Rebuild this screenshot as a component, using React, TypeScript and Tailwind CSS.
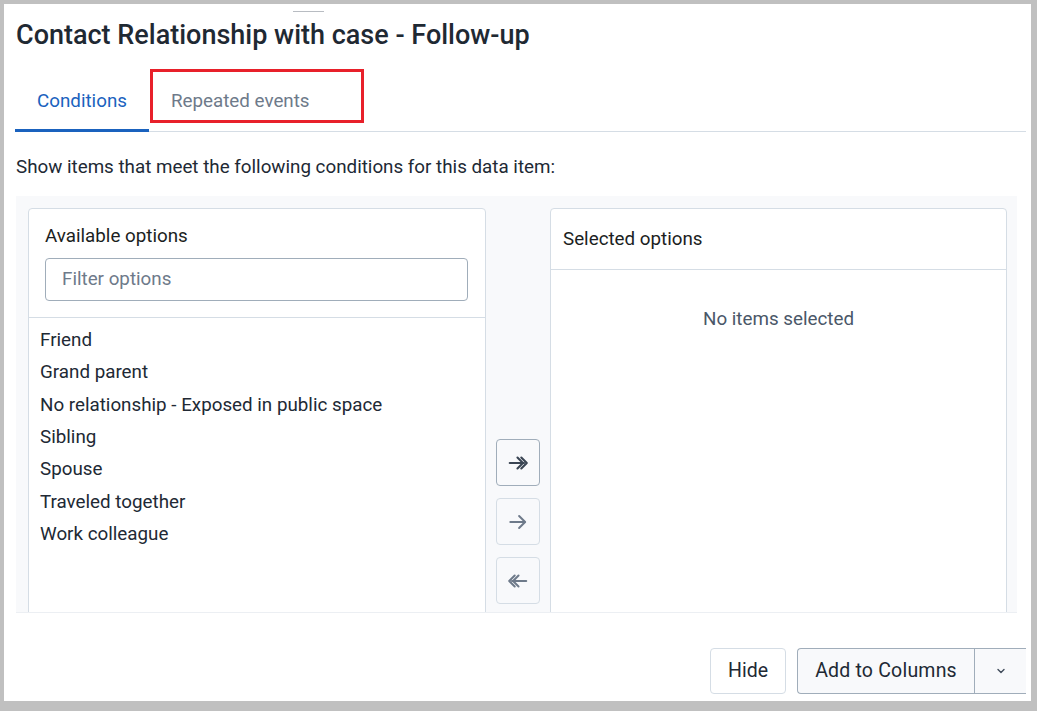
import React from "react";

const DoubleRight = ({ color }: { color: string }) => (
  <svg width="22" height="22" viewBox="0 0 20 20" fill="none" stroke={color} strokeWidth="1.9" strokeLinecap="round" strokeLinejoin="round">
    <path d="M2.5 10h13" />
    <path d="M9.5 5l5 5-5 5" />
    <path d="M13 5l5 5-5 5" />
  </svg>
);
const SingleRight = ({ color }: { color: string }) => (
  <svg width="22" height="22" viewBox="0 0 20 20" fill="none" stroke={color} strokeWidth="1.8" strokeLinecap="round" strokeLinejoin="round">
    <path d="M3 10h13" />
    <path d="M11 4.5l5.5 5.5-5.5 5.5" />
  </svg>
);
const DoubleLeft = ({ color }: { color: string }) => (
  <svg width="22" height="22" viewBox="0 0 20 20" fill="none" stroke={color} strokeWidth="1.8" strokeLinecap="round" strokeLinejoin="round">
    <path d="M17.5 10h-13" />
    <path d="M10.5 5l-5 5 5 5" />
    <path d="M7 5l-5 5 5 5" />
  </svg>
);

const items = [
  "Friend",
  "Grand parent",
  "No relationship - Exposed in public space",
  "Sibling",
  "Spouse",
  "Traveled together",
  "Work colleague",
];

export default function App() {
  return (
    <div className="w-[1037px] h-[711px] bg-[#c0c0c0] pt-[4px] pl-[4px] pr-[6px] pb-[10px] font-['Roboto',sans-serif]">
      <div className="relative h-full w-full bg-white overflow-hidden pl-[11px] pr-[5px] text-[#212934]">
        <div className="absolute left-[289px] top-[7px] w-[31px] h-px bg-[#b8bcc2]" />
        <h1 className="pt-[15px] pl-[1px] text-[27px] leading-[32px] font-medium text-[#1f2933]">
          Contact Relationship with case - Follow-up
        </h1>
        <div className="mt-[22px] flex border-b border-[#d5dde5]">
          <div className="px-[22px] pt-[16px] pb-[15px] border-b-[3px] border-[#1a62be] text-[18.8px] leading-[24px] text-[#1a62be] -mb-px">
            Conditions
          </div>
          <div className="relative px-[22px] pt-[16px] pb-[18px] text-[18.8px] leading-[24px] text-[#6e7a8a]">
            Repeated events
            <div className="absolute left-[1px] top-[-4px] w-[214px] h-[54px] border-[3px] border-[#e8202a]" />
          </div>
        </div>
        <p className="mt-[23px] pl-[1px] text-[18.8px] leading-[24px] text-[#212934]">
          Show items that meet the following conditions for this data item:
        </p>
        <div className="mt-[17px] ml-[1px] w-[1001px] h-[417px] overflow-hidden bg-[#f8f9fb] border-b border-[#eceff3] pl-[12px] pr-[10px] pt-[12px]">
          <div className="flex h-[630px]">
            <div className="w-[458px] shrink-0 bg-white border border-[#d5dde5] rounded-[4px] flex flex-col">
              <div className="border-b border-[#d5dde5] pl-[16px] pr-[17px] pt-[15px] pb-[16px]">
                <div className="text-[18.8px] leading-[24px] text-[#1b1e22]">Available options</div>
                <div className="mt-[10px] h-[43px] border border-[#a0adba] rounded-[4px] px-[16px] flex items-center text-[18.8px] text-[#6e7a8a]">
                  Filter options
                </div>
              </div>
              <ul className="pt-[6px] pl-[11px]">
                {items.map((t) => (
                  <li key={t} className="h-[32.3px] flex items-center text-[18.8px] text-[#212934]">
                    {t}
                  </li>
                ))}
              </ul>
            </div>
            <div className="w-[64px] shrink-0 flex flex-col items-center pt-[231px] gap-[12px]">
              <div className="w-[44px] h-[47px] rounded-[4px] border border-[#a0adba] bg-[#f8f9fb] flex items-center justify-center">
                <DoubleRight color="#3a4553" />
              </div>
              <div className="w-[44px] h-[47px] rounded-[4px] border border-[#d5dde5] bg-[#f8f9fb] flex items-center justify-center">
                <SingleRight color="#6e7a8a" />
              </div>
              <div className="w-[44px] h-[47px] rounded-[4px] border border-[#d5dde5] bg-[#f8f9fb] flex items-center justify-center">
                <DoubleLeft color="#6e7a8a" />
              </div>
            </div>
            <div className="w-[457px] shrink-0 bg-white border border-[#d5dde5] rounded-[4px] flex flex-col">
              <div className="h-[61px] border-b border-[#d5dde5] pl-[12px] pt-[18px] text-[18.8px] leading-[24px] text-[#1b1e22]">
                Selected options
              </div>
              <div className="pt-[37px] text-center text-[18.8px] leading-[24px] text-[#4a5768]">
                No items selected
              </div>
            </div>
          </div>
        </div>
        <div className="mt-[35px] flex justify-end">
          <button className="w-[76px] h-[46px] rounded-[4px] border border-[#d5dde5] bg-white text-[19.5px] text-[#212934]">
            Hide
          </button>
          <div className="ml-[11px] flex h-[46px] rounded-l-[4px] border border-[#a0adba] border-r-0 bg-[#f8f9fb]">
            <button className="w-[177px] h-full border-r border-[#a0adba] text-[19.5px] tracking-[0.2px] text-[#212934]">
              Add to Columns
            </button>
            <button className="w-[51px] h-full flex items-center justify-center">
              <svg width="14" height="14" viewBox="0 0 14 14" fill="none" stroke="#404b5a" strokeWidth="1.4" strokeLinecap="round" strokeLinejoin="round">
                <path d="M4 5.5l3 3 3-3" />
              </svg>
            </button>
          </div>
        </div>
      </div>
    </div>
  );
}
